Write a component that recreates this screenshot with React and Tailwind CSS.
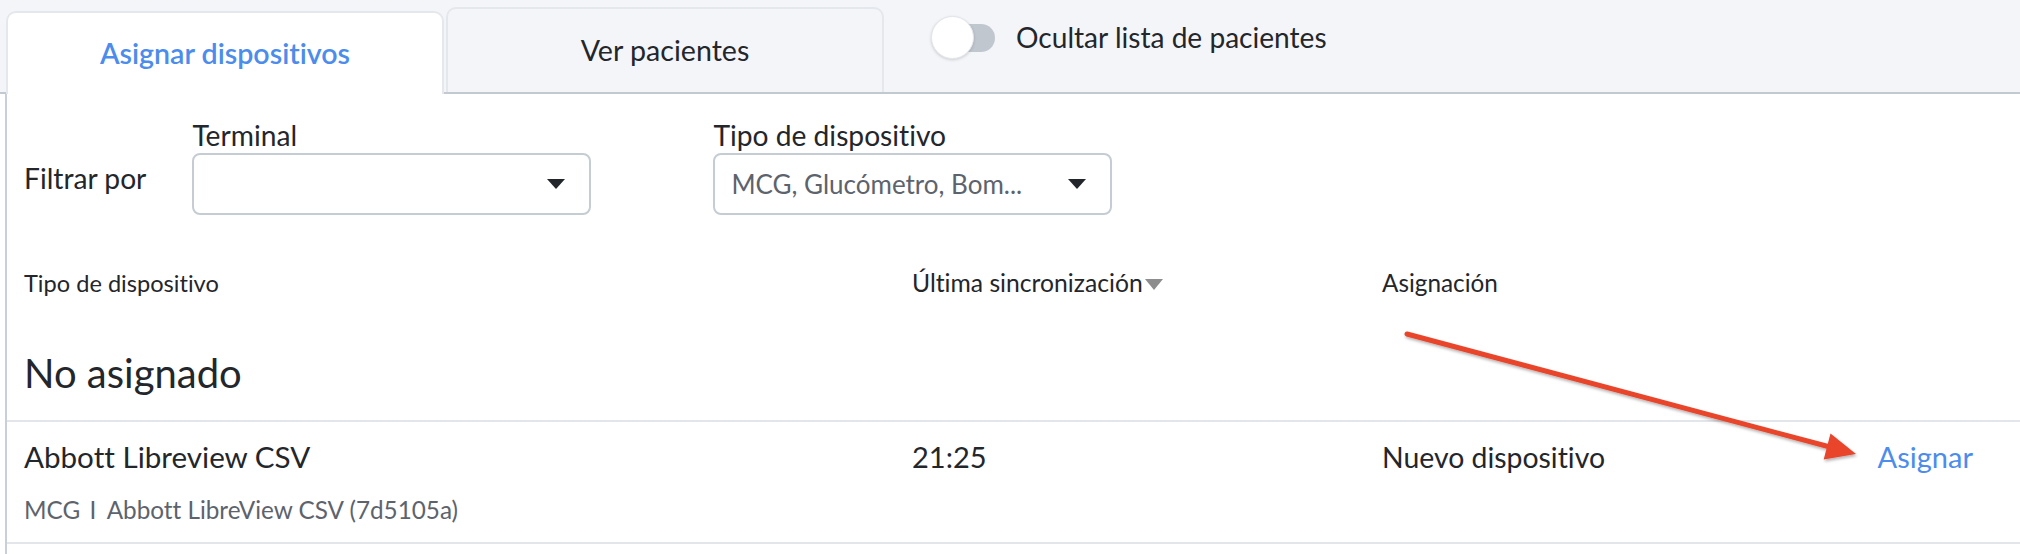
import React from "react";

function Caret({ className = "" }) {
  return (
    <svg width="18" height="10" viewBox="0 0 18 10" className={className}>
      <path d="M0 0 H18 L9 10 Z" fill="#22252a" />
    </svg>
  );
}

function Select({ placeholder }) {
  return (
    <div className="w-[399px] h-[62px] rounded-[8px] border-2 border-[#c6ccd4] bg-white flex items-center pl-[16px] pr-[24px]">
      <span className="flex-1 text-[26px] text-[#5d636c] truncate">{placeholder}</span>
      <Caret />
    </div>
  );
}

export default function App() {
  return (
    <div
      className="relative w-[2020px] h-[554px] bg-white overflow-hidden text-[#23262b] [font-variant-ligatures:none]"
      style={{ fontFamily: "Lato, 'Open Sans', sans-serif" }}
    >
      {/* Tab bar */}
      <div className="h-[94px] bg-[#f4f5f9] border-b-2 border-[#c2c9d1] flex items-end pl-[6px]">
        <div className="w-[438px] h-[83px] -mb-[2px] bg-white rounded-t-[10px] border-2 border-b-0 border-[#e4e7eb] flex items-center justify-center text-[28.6px] font-semibold text-[#4b8cec] relative z-10">
          Asignar dispositivos
        </div>
        <div className="ml-[2px] w-[438px] h-[85px] rounded-t-[10px] border-2 border-b-0 border-[#e4e7eb] flex items-center justify-center text-[28.6px]">
          Ver pacientes
        </div>
        <div className="self-start mt-[16px] ml-[47px] flex items-center gap-[21px]">
          <div className="relative w-[64px] h-[43px] flex items-center justify-end">
            <div className="w-[56px] h-[28px] rounded-full bg-[#c1c7cf]" />
            <div className="absolute left-0 top-0 w-[43px] h-[43px] rounded-full bg-white border border-[#e3e6ea] shadow-[0_1px_3px_rgba(0,0,0,0.16)]" />
          </div>
          <span className="text-[28.1px] leading-[34px] -mt-[2px]">Ocultar lista de pacientes</span>
        </div>
      </div>

      {/* Content */}
      <div className="ml-[5px] border-l-2 border-[#c9cfd6] h-[460px]">
        {/* Filters */}
        <div className="pt-[23px] pl-[17px] flex items-end">
          <span className="text-[28.2px] leading-[36px] mb-[19px]">Filtrar por</span>
          <div className="ml-[46px] flex flex-col">
            <span className="text-[28.2px] leading-[36px]">Terminal</span>
            <Select placeholder="" />
          </div>
          <div className="ml-[122px] flex flex-col">
            <span className="text-[28.2px] leading-[36px]">Tipo de dispositivo</span>
            <Select placeholder="MCG, Glucómetro, Bom..." />
          </div>
        </div>

        {/* Table header */}
        <div className="mt-[52px] grid grid-cols-[888px_470px_1fr_auto] pl-[17px] pr-[47px] leading-[32px]">
          <span className="text-[23.6px]">Tipo de dispositivo</span>
          <span className="flex items-center text-[24.7px]">
            Última sincronización
            <svg width="18" height="11" viewBox="0 0 18 11" className="ml-[2px] mt-[3px]">
              <path d="M0 0 H18 L9 11 Z" fill="#8d8d8d" />
            </svg>
          </span>
          <span className="text-[24.3px]">Asignación</span>
          <span />
        </div>

        {/* Group heading */}
        <div className="mt-[50px] pl-[17px] text-[40px] leading-[48px]">No asignado</div>

        {/* Row */}
        <div className="mt-[23px] border-t-2 border-b-2 border-[#e2e5ea] grid grid-cols-[888px_470px_1fr_auto] pl-[17px] pr-[47px] pt-[17px] pb-[16px]">
          <div className="flex flex-col">
            <span className="text-[29.6px] leading-[36px]">Abbott Libreview CSV</span>
            <span className="mt-[19px] text-[24.3px] leading-[32px] text-[#5d636c]">
              MCG <span className="ml-[3px] mr-[5px]">I</span> Abbott LibreView CSV (7d5105a)
            </span>
          </div>
          <span className="text-[29px] leading-[36px]">21:25</span>
          <span className="text-[28.4px] leading-[36px]">Nuevo dispositivo</span>
          <span className="text-[29px] leading-[36px] text-[#4b8cec]">Asignar</span>
        </div>
      </div>

      {/* Annotation arrow */}
      <svg
        className="absolute inset-0 pointer-events-none"
        width="2020"
        height="554"
        viewBox="0 0 2020 554"
      >
        <defs>
          <filter id="sh" x="-10%" y="-10%" width="120%" height="120%">
            <feDropShadow dx="1" dy="2" stdDeviation="1.5" floodColor="#000" floodOpacity="0.3" />
          </filter>
        </defs>
        <g filter="url(#sh)">
          <line x1="1407" y1="334" x2="1830" y2="447" stroke="#e8442b" strokeWidth="5" strokeLinecap="round" />
          <polygon points="1856,454 1823.7,459.5 1830.5,433.5" fill="#e8442b" />
        </g>
      </svg>
    </div>
  );
}
